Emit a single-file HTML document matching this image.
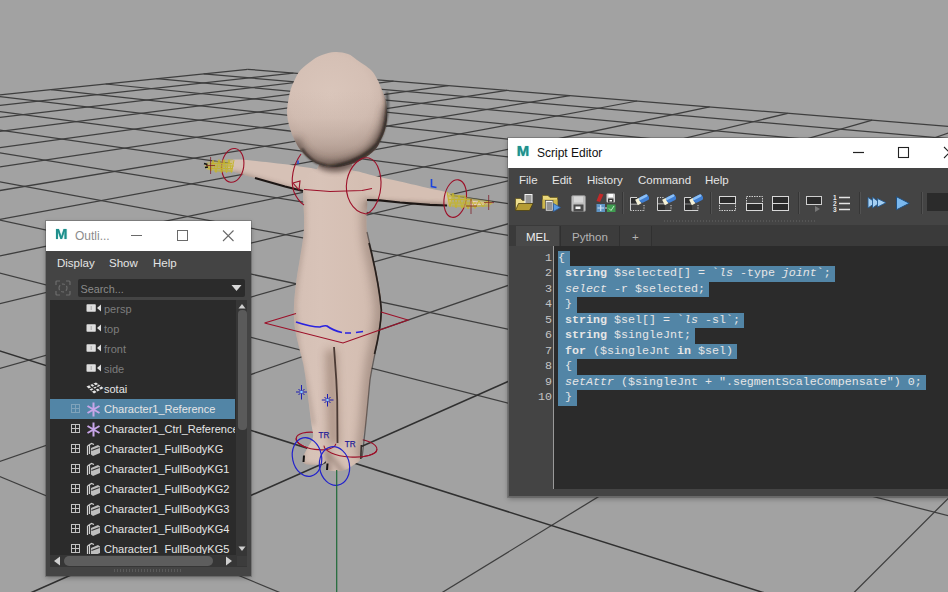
<!DOCTYPE html><html><head><meta charset="utf-8"><title>Maya</title><style>
html,body{margin:0;padding:0}
html{overflow:hidden;width:948px;height:592px}
body{width:948px;height:592px;overflow:hidden;background:#a2a2a2;position:relative;font-family:"Liberation Sans",sans-serif}
.win{position:absolute;background:#444;box-shadow:0 0 0 1px rgba(60,60,60,.3),0 2px 5px rgba(0,0,0,.3)}
.tb{position:absolute;left:0;top:0;right:0;background:#fff}
.mlogo{position:absolute;font-weight:bold;font-size:16px;line-height:16px;color:#1f8f8c;text-shadow:0 0 1px #3fb0ac}
.tt{position:absolute;font-size:12px;line-height:16px;white-space:nowrap}
.menu{position:absolute;left:0;right:0;color:#e4e4e4;font-size:11.500px}
.menu span{position:absolute;top:5px;white-space:nowrap}
.row{position:absolute;left:0;width:185px;height:20px;white-space:nowrap}
.row.sel{background:#5285a6}
.pm{position:absolute;left:21px;top:5px;width:7px;height:7px;border:1px solid #c2c2c2;background:linear-gradient(#c2c2c2,#c2c2c2) center/100% 1px no-repeat,linear-gradient(#c2c2c2,#c2c2c2) center/1px 100% no-repeat}
.pm.dim{border-color:#7fa3bb;background:linear-gradient(#7fa3bb,#7fa3bb) center/100% 1px no-repeat,linear-gradient(#7fa3bb,#7fa3bb) center/1px 100% no-repeat}
.ic{position:absolute;left:36px;top:3px;line-height:0}
.nm{position:absolute;left:54px;top:3px;font-size:11px;line-height:14px}
.tab{position:absolute;top:88px;height:20px;font-size:11.500px}
.tab span{position:absolute;top:4.500px}
.code{position:absolute;left:4px;top:4.500px;font-family:"Liberation Mono",monospace;font-size:11.670px;color:#e6e6e6;white-space:pre}
.cl{height:15.550px;line-height:15.550px}
.hl{background:#5285a6;display:inline-block;height:15.550px}
.nl{display:inline-block;width:4.500px}
.nums{position:absolute;left:0;top:112.500px;width:44px;font-family:"Liberation Mono",monospace;font-size:11.670px;color:#c4c4c4;text-align:right}
.ln{height:15.550px;line-height:15.550px}
</style></head><body><svg style="position:absolute;left:0;top:0" width="948" height="592" viewBox="0 0 948 592"><g stroke="#3e3e3e" stroke-width="1.25" fill="none"><line x1="1153.5" y1="900.0" x2="1200.0" y2="773.8"/><line x1="546.4" y1="900.0" x2="1200.0" y2="246.7"/><line x1="310.8" y1="900.0" x2="-200.0" y2="594.0"/><line x1="-59.3" y1="900.0" x2="1172.6" y2="144.6"/><line x1="1022.0" y1="900.0" x2="-200.0" y2="393.8"/><line x1="-200.0" y1="530.7" x2="963.8" y2="127.6"/><line x1="1200.0" y1="580.1" x2="-200.0" y2="222.0"/><line x1="-200.0" y1="425.3" x2="872.2" y2="120.2"/><line x1="1200.0" y1="477.8" x2="-200.0" y2="177.3"/><line x1="-200.0" y1="352.0" x2="787.7" y2="113.3"/><line x1="1200.0" y1="403.6" x2="-200.0" y2="144.9"/><line x1="-200.0" y1="298.0" x2="709.6" y2="106.9"/><line x1="1200.0" y1="347.4" x2="-200.0" y2="120.4"/><line x1="-200.0" y1="256.6" x2="637.2" y2="101.0"/><line x1="1200.0" y1="303.4" x2="-142.1" y2="109.6"/><line x1="-200.0" y1="223.8" x2="569.9" y2="95.6"/><line x1="1200.0" y1="267.9" x2="-72.3" y2="102.3"/><line x1="-200.0" y1="197.2" x2="507.1" y2="90.4"/><line x1="1200.0" y1="238.8" x2="-8.1" y2="95.7"/><line x1="-200.0" y1="175.2" x2="448.4" y2="85.7"/><line x1="1200.0" y1="214.4" x2="51.0" y2="89.6"/><line x1="-200.0" y1="156.8" x2="393.5" y2="81.2"/><line x1="1200.0" y1="193.7" x2="105.7" y2="84.0"/><line x1="-200.0" y1="141.0" x2="341.9" y2="77.0"/><line x1="1200.0" y1="175.9" x2="156.5" y2="78.7"/><line x1="-200.0" y1="127.4" x2="293.4" y2="73.1"/><line x1="1200.0" y1="160.4" x2="203.7" y2="73.9"/><line x1="-200.0" y1="115.5" x2="247.7" y2="69.3"/><line x1="1200.0" y1="146.9" x2="247.7" y2="69.3"/></g><g stroke="#303030" stroke-width="1.6" fill="none"><line x1="-200.0" y1="694.9" x2="1063.6" y2="135.8"/><line x1="1200.0" y1="730.7" x2="-200.0" y2="287.7"/></g>
<defs>
<radialGradient id="hg" gradientUnits="userSpaceOnUse" cx="330" cy="96" r="74">
<stop offset="0" stop-color="#dac6bb"/><stop offset="0.55" stop-color="#d5c0b5"/><stop offset="0.85" stop-color="#c8b2a7"/><stop offset="1" stop-color="#baa49a"/></radialGradient>
<linearGradient id="bg" gradientUnits="userSpaceOnUse" x1="294" y1="0" x2="383" y2="0">
<stop offset="0" stop-color="#d5c0b5"/><stop offset="0.3" stop-color="#d8c3b8"/><stop offset="0.7" stop-color="#d5bfb3"/><stop offset="1" stop-color="#cfb9ad"/></linearGradient>
<linearGradient id="hs" gradientUnits="userSpaceOnUse" x1="0" y1="90" x2="0" y2="168"><stop offset="0" stop-color="#5a463c" stop-opacity="0"/><stop offset="0.35" stop-color="#5a463c" stop-opacity="0.04"/><stop offset="0.7" stop-color="#5a463c" stop-opacity="0.18"/><stop offset="1" stop-color="#5a463c" stop-opacity="0.4"/></linearGradient>
<filter id="b1" filterUnits="userSpaceOnUse" x="150" y="0" width="400" height="592"><feGaussianBlur stdDeviation="1.2"/></filter>
<filter id="b2" filterUnits="userSpaceOnUse" x="150" y="0" width="400" height="592"><feGaussianBlur stdDeviation="2.5"/></filter>
<filter id="b4" filterUnits="userSpaceOnUse" x="150" y="0" width="400" height="592"><feGaussianBlur stdDeviation="4.5"/></filter>
<clipPath id="bodyclip"><path d="M324.0 172.0C322.0 168.9 309.0 168.1 300.0 166.5C291.0 164.9 280.0 163.7 270.0 162.5C260.0 161.3 246.5 159.8 240.0 159.5C233.5 159.2 233.0 159.6 231.0 160.5C229.0 161.4 227.8 163.2 228.0 165.0C228.2 166.8 226.3 168.5 232.0 171.0C237.7 173.5 253.2 177.4 262.0 180.0C270.8 182.6 278.2 184.7 285.0 186.5C291.8 188.3 298.5 191.2 303.0 191.0C307.5 190.8 308.5 188.2 312.0 185.0C315.5 181.8 326.0 175.1 324.0 172.0Z"/><path d="M350.0 171.0C352.5 169.0 366.7 174.2 375.0 176.0C383.3 177.8 390.8 179.4 400.0 181.5C409.2 183.6 422.2 186.7 430.0 188.5C437.8 190.3 443.3 190.9 447.0 192.5C450.7 194.1 451.8 195.9 452.0 198.0C452.2 200.1 451.7 203.9 448.0 205.0C444.3 206.1 438.0 204.8 430.0 204.3C422.0 203.8 408.3 202.8 400.0 202.0C391.7 201.2 385.5 200.2 380.0 199.8C374.5 199.4 370.3 201.5 367.0 199.5C363.7 197.5 362.8 192.8 360.0 188.0C357.2 183.2 347.5 173.0 350.0 171.0Z"/><path d="M323.0 163.0C328.7 161.8 345.2 161.8 350.0 163.0C354.8 164.2 350.0 167.5 352.0 170.0C354.0 172.5 359.5 173.0 362.0 178.0C364.5 183.0 366.2 193.8 367.0 200.0C367.8 206.2 366.5 209.7 366.5 215.0C366.5 220.3 366.2 226.2 367.0 232.0C367.8 237.8 369.5 243.7 371.0 250.0C372.5 256.3 374.5 263.3 376.0 270.0C377.5 276.7 379.1 283.3 380.0 290.0C380.9 296.7 381.3 304.2 381.5 310.0C381.7 315.8 381.8 319.2 381.0 325.0C380.2 330.8 378.3 339.2 377.0 345.0C375.7 350.8 374.2 354.2 373.0 360.0C371.8 365.8 370.8 373.3 370.0 380.0C369.2 386.7 368.6 393.3 368.0 400.0C367.4 406.7 367.2 414.7 366.5 420.0C365.8 425.3 364.8 427.8 364.0 432.0C363.2 436.2 362.4 440.7 362.0 445.0C361.6 449.3 362.7 454.8 361.5 458.0C360.3 461.2 357.8 462.0 355.0 464.0C352.2 466.0 348.8 468.8 345.0 470.0C341.2 471.2 335.2 471.3 332.0 471.0C328.8 470.7 327.0 469.8 326.0 468.0C325.0 466.2 326.7 460.7 326.0 460.0C325.3 459.3 325.0 463.2 322.0 464.0C319.0 464.8 311.2 464.8 308.0 464.5C304.8 464.2 303.8 463.2 303.0 462.0C302.2 460.8 302.2 459.5 303.0 457.0C303.8 454.5 306.3 450.3 308.0 447.0C309.7 443.7 312.4 440.7 313.0 437.0C313.6 433.3 312.2 430.3 311.5 425.0C310.8 419.7 309.8 411.7 309.0 405.0C308.2 398.3 307.4 391.7 306.5 385.0C305.6 378.3 304.8 371.7 303.5 365.0C302.2 358.3 300.0 351.7 298.5 345.0C297.0 338.3 295.2 331.7 294.5 325.0C293.8 318.3 293.7 312.5 294.0 305.0C294.3 297.5 295.5 287.8 296.5 280.0C297.5 272.2 298.8 265.5 300.0 258.0C301.2 250.5 302.8 242.2 303.5 235.0C304.2 227.8 304.1 222.2 304.0 215.0C303.9 207.8 302.7 198.5 303.0 192.0C303.3 185.5 303.8 179.7 306.0 176.0C308.2 172.3 313.2 172.2 316.0 170.0C318.8 167.8 317.3 164.2 323.0 163.0Z"/></clipPath>
<clipPath id="headclip"><path d="M335.0 52.0C339.3 51.8 344.3 52.7 348.0 54.0C351.7 55.3 353.2 57.3 357.0 60.0C360.8 62.7 367.6 66.7 371.0 70.0C374.4 73.3 375.8 76.7 377.6 80.0C379.4 83.3 380.6 86.7 382.0 90.0C383.4 93.3 384.9 96.7 385.7 100.0C386.5 103.3 386.8 106.7 387.0 110.0C387.2 113.3 387.3 116.7 387.0 120.0C386.7 123.3 386.0 126.7 385.0 130.0C384.0 133.3 382.5 136.7 380.8 140.0C379.1 143.3 378.1 146.7 374.9 150.0C371.7 153.3 366.1 157.4 361.4 160.0C356.7 162.6 351.1 164.3 346.5 165.5C341.9 166.7 338.1 167.0 334.0 167.0C329.9 167.0 325.9 166.7 322.0 165.5C318.1 164.3 314.4 162.6 310.8 160.0C307.2 157.4 303.2 153.3 300.5 150.0C297.8 146.7 296.3 143.3 294.6 140.0C292.9 136.7 291.6 133.3 290.5 130.0C289.4 126.7 288.4 123.3 287.8 120.0C287.2 116.7 286.9 113.3 287.0 110.0C287.1 106.7 287.8 103.3 288.4 100.0C289.0 96.7 289.5 93.3 290.5 90.0C291.5 86.7 292.9 83.3 294.6 80.0C296.3 76.7 297.5 73.3 300.5 70.0C303.5 66.7 309.1 62.5 312.7 60.0C316.3 57.5 318.3 56.3 322.0 55.0C325.7 53.7 330.7 52.2 335.0 52.0Z"/></clipPath>
</defs>
<g>
<g fill="none" stroke="#9c1029" stroke-width="1.100"><ellipse cx="316" cy="441" rx="20" ry="8.500" transform="rotate(8 316 441)"/><ellipse cx="350.500" cy="447.500" rx="26.500" ry="9.500" transform="rotate(4 350.500 447.500)"/></g>
<path d="M324.0 172.0C322.0 168.9 309.0 168.1 300.0 166.5C291.0 164.9 280.0 163.7 270.0 162.5C260.0 161.3 246.5 159.8 240.0 159.5C233.5 159.2 233.0 159.6 231.0 160.5C229.0 161.4 227.8 163.2 228.0 165.0C228.2 166.8 226.3 168.5 232.0 171.0C237.7 173.5 253.2 177.4 262.0 180.0C270.8 182.6 278.2 184.7 285.0 186.5C291.8 188.3 298.5 191.2 303.0 191.0C307.5 190.8 308.5 188.2 312.0 185.0C315.5 181.8 326.0 175.1 324.0 172.0Z" fill="#d6c1b6"/>
<path d="M350.0 171.0C352.5 169.0 366.7 174.2 375.0 176.0C383.3 177.8 390.8 179.4 400.0 181.5C409.2 183.6 422.2 186.7 430.0 188.5C437.8 190.3 443.3 190.9 447.0 192.5C450.7 194.1 451.8 195.9 452.0 198.0C452.2 200.1 451.7 203.9 448.0 205.0C444.3 206.1 438.0 204.8 430.0 204.3C422.0 203.8 408.3 202.8 400.0 202.0C391.7 201.2 385.5 200.2 380.0 199.8C374.5 199.4 370.3 201.5 367.0 199.5C363.7 197.5 362.8 192.8 360.0 188.0C357.2 183.2 347.5 173.0 350.0 171.0Z" fill="#d5bfb3"/>
<path d="M323.0 163.0C328.7 161.8 345.2 161.8 350.0 163.0C354.8 164.2 350.0 167.5 352.0 170.0C354.0 172.5 359.5 173.0 362.0 178.0C364.5 183.0 366.2 193.8 367.0 200.0C367.8 206.2 366.5 209.7 366.5 215.0C366.5 220.3 366.2 226.2 367.0 232.0C367.8 237.8 369.5 243.7 371.0 250.0C372.5 256.3 374.5 263.3 376.0 270.0C377.5 276.7 379.1 283.3 380.0 290.0C380.9 296.7 381.3 304.2 381.5 310.0C381.7 315.8 381.8 319.2 381.0 325.0C380.2 330.8 378.3 339.2 377.0 345.0C375.7 350.8 374.2 354.2 373.0 360.0C371.8 365.8 370.8 373.3 370.0 380.0C369.2 386.7 368.6 393.3 368.0 400.0C367.4 406.7 367.2 414.7 366.5 420.0C365.8 425.3 364.8 427.8 364.0 432.0C363.2 436.2 362.4 440.7 362.0 445.0C361.6 449.3 362.7 454.8 361.5 458.0C360.3 461.2 357.8 462.0 355.0 464.0C352.2 466.0 348.8 468.8 345.0 470.0C341.2 471.2 335.2 471.3 332.0 471.0C328.8 470.7 327.0 469.8 326.0 468.0C325.0 466.2 326.7 460.7 326.0 460.0C325.3 459.3 325.0 463.2 322.0 464.0C319.0 464.8 311.2 464.8 308.0 464.5C304.8 464.2 303.8 463.2 303.0 462.0C302.2 460.8 302.2 459.5 303.0 457.0C303.8 454.5 306.3 450.3 308.0 447.0C309.7 443.7 312.4 440.7 313.0 437.0C313.6 433.3 312.2 430.3 311.5 425.0C310.8 419.7 309.8 411.7 309.0 405.0C308.2 398.3 307.4 391.7 306.5 385.0C305.6 378.3 304.8 371.7 303.5 365.0C302.2 358.3 300.0 351.7 298.5 345.0C297.0 338.3 295.2 331.7 294.5 325.0C293.8 318.3 293.7 312.5 294.0 305.0C294.3 297.5 295.5 287.8 296.5 280.0C297.5 272.2 298.8 265.5 300.0 258.0C301.2 250.5 302.8 242.2 303.5 235.0C304.2 227.8 304.1 222.2 304.0 215.0C303.9 207.8 302.7 198.5 303.0 192.0C303.3 185.5 303.8 179.7 306.0 176.0C308.2 172.3 313.2 172.2 316.0 170.0C318.8 167.8 317.3 164.2 323.0 163.0Z" fill="url(#bg)"/>
<g clip-path="url(#bodyclip)">
 <path d="M232 173L262 182L285 188.5L303 193" stroke="#7a665e" stroke-width="5" fill="none" filter="url(#b2)" opacity="0.6"/>
 <path d="M367 203L400 205L447 207" stroke="#6a564e" stroke-width="6" fill="none" filter="url(#b2)" opacity="0.7"/>
 <path d="M368 200C368 215 367 232 371 250C376 270 380 290 381.500 310C381 325 377 345 373 360C370 380 368 400 366.500 420L362 458" stroke="#6a564e" stroke-width="14" fill="none" filter="url(#b4)" opacity="0.36"/>
 <path d="M316 166C326 174 345 174 356 165L356 160L316 160Z" fill="#5a4a44" filter="url(#b2)" opacity="0.8"/>
 <path d="M303 196L303.500 235L296.500 280L294 305L297 345L306 385L313 425" stroke="#8a7870" stroke-width="4" fill="none" filter="url(#b2)" opacity="0.45"/>
 <path d="M331 350L334 445" stroke="#7a5e50" stroke-width="11" fill="none" filter="url(#b4)" opacity="0.45"/>
 <path d="M303 440L300 465L330 470L326 450L345 475L365 465L362 452" stroke="#6a564e" stroke-width="4" fill="none" filter="url(#b2)" opacity="0.5"/>
</g>
<path d="M255 178L262 180L285 186.500L303 191" stroke="#1c1614" stroke-width="2.200" fill="none"/>
<path d="M367 200L380 200.300L400 202.500L430 204.800L447 205.500" stroke="#1c1614" stroke-width="2.200" fill="none"/>
<path d="M334 347L336.300 380L337.200 400L337.500 443" stroke="#4b3a34" stroke-width="1.800" fill="none"/>
<path d="M367 232C371 250 379 280 381.500 310C381 330 374 355 370 380C368 400 366 425 362 458" stroke="#2e2420" stroke-width="1.300" fill="none" opacity="0.55"/>
<path d="M369 243C372 255 379 282 381.300 310C381 325 378 340 374.500 354" stroke="#1a1412" stroke-width="1.700" fill="none" opacity="0.85"/>
<path d="M303.500 462L304 455.500M327 470L327.500 463.500" stroke="#111" stroke-width="2" fill="none"/><path d="M361.300 445L360.800 459" stroke="#111" stroke-width="1.400" fill="none" opacity="0.85"/>
<path d="M335.0 52.0C339.3 51.8 344.3 52.7 348.0 54.0C351.7 55.3 353.2 57.3 357.0 60.0C360.8 62.7 367.6 66.7 371.0 70.0C374.4 73.3 375.8 76.7 377.6 80.0C379.4 83.3 380.6 86.7 382.0 90.0C383.4 93.3 384.9 96.7 385.7 100.0C386.5 103.3 386.8 106.7 387.0 110.0C387.2 113.3 387.3 116.7 387.0 120.0C386.7 123.3 386.0 126.7 385.0 130.0C384.0 133.3 382.5 136.7 380.8 140.0C379.1 143.3 378.1 146.7 374.9 150.0C371.7 153.3 366.1 157.4 361.4 160.0C356.7 162.6 351.1 164.3 346.5 165.5C341.9 166.7 338.1 167.0 334.0 167.0C329.9 167.0 325.9 166.7 322.0 165.5C318.1 164.3 314.4 162.6 310.8 160.0C307.2 157.4 303.2 153.3 300.5 150.0C297.8 146.7 296.3 143.3 294.6 140.0C292.9 136.7 291.6 133.3 290.5 130.0C289.4 126.7 288.4 123.3 287.8 120.0C287.2 116.7 286.9 113.3 287.0 110.0C287.1 106.7 287.8 103.3 288.4 100.0C289.0 96.7 289.5 93.3 290.5 90.0C291.5 86.7 292.9 83.3 294.6 80.0C296.3 76.7 297.5 73.3 300.5 70.0C303.5 66.7 309.1 62.5 312.7 60.0C316.3 57.5 318.3 56.3 322.0 55.0C325.7 53.7 330.7 52.2 335.0 52.0Z" fill="url(#hg)"/>
<path d="M335.0 52.0C339.3 51.8 344.3 52.7 348.0 54.0C351.7 55.3 353.2 57.3 357.0 60.0C360.8 62.7 367.6 66.7 371.0 70.0C374.4 73.3 375.8 76.7 377.6 80.0C379.4 83.3 380.6 86.7 382.0 90.0C383.4 93.3 384.9 96.7 385.7 100.0C386.5 103.3 386.8 106.7 387.0 110.0C387.2 113.3 387.3 116.7 387.0 120.0C386.7 123.3 386.0 126.7 385.0 130.0C384.0 133.3 382.5 136.7 380.8 140.0C379.1 143.3 378.1 146.7 374.9 150.0C371.7 153.3 366.1 157.4 361.4 160.0C356.7 162.6 351.1 164.3 346.5 165.5C341.9 166.7 338.1 167.0 334.0 167.0C329.9 167.0 325.9 166.7 322.0 165.5C318.1 164.3 314.4 162.6 310.8 160.0C307.2 157.4 303.2 153.3 300.5 150.0C297.8 146.7 296.3 143.3 294.6 140.0C292.9 136.7 291.6 133.3 290.5 130.0C289.4 126.7 288.4 123.3 287.8 120.0C287.2 116.7 286.9 113.3 287.0 110.0C287.1 106.7 287.8 103.3 288.4 100.0C289.0 96.7 289.5 93.3 290.5 90.0C291.5 86.7 292.9 83.3 294.6 80.0C296.3 76.7 297.5 73.3 300.5 70.0C303.5 66.7 309.1 62.5 312.7 60.0C316.3 57.5 318.3 56.3 322.0 55.0C325.7 53.7 330.7 52.2 335.0 52.0Z" fill="url(#hs)"/>
<g clip-path="url(#headclip)">
 <path d="M294 140C299 152 307 160 317 164.500C328 169 345 166 362 158C376 150 386 132 389 108" stroke="#4a3a34" stroke-width="9" fill="none" filter="url(#b4)" opacity="0.75"/>
 <path d="M384 70C390 100 390 130 378 146C368 157 352 164 334 168" stroke="#2a201c" stroke-width="4" fill="none" filter="url(#b2)" opacity="0.8"/>
</g>
<path d="M387 92C389 110 386 130 377 144C368 154 355 161 340 165C333 167 325 166 317 163C311 160 306 155 302 149" stroke="#1e1613" stroke-width="1.600" fill="none" filter="url(#b1)" opacity="0.9"/>
</g>

<g fill="none" stroke-width="1.1">
<g stroke="#9c1029">
<ellipse cx="232.8" cy="165.4" rx="11" ry="17" transform="rotate(8 232.8 165.4)"/>
<ellipse cx="455.2" cy="198.6" rx="11" ry="19" transform="rotate(10 455.2 198.6)"/>
<path d="M301 154C293 165 290 180 294 192C297 199 301 203 304 205"/>
<path d="M293 183L300 181L299 190Z"/>
<path d="M366 214C352 212 344 196 347 180C350 166 360 156 369 158C379 161 383 178 380 193C378 204 372 212 366 214Z"/>
<path d="M304 189.500L330 191.500L362 190.500L372 188.500"/>
<path d="M264.5 323L296 313.5M381 312L408 320L343 343L264.5 323"/>
<path d="M-20 0A20 8.500 0 0 0 20 0" transform="translate(316 441) rotate(8)"/>
<path d="M-26.500 0A26.500 9.500 0 0 0 26.500 0" transform="translate(350.500 447.500) rotate(4)"/>
</g>
<g stroke="#2222cc" stroke-width="1.2">
<ellipse cx="307" cy="457" rx="14.5" ry="19.5" transform="rotate(-12 307 457)"/>
<ellipse cx="334.5" cy="466" rx="15" ry="19.5" transform="rotate(-10 334.5 466)"/>
</g>
<path d="M296 322C305 325 313 327 320 327C323 326 325 325 327 326C331 329 335 331 342 332.5" stroke="#2a22e0" stroke-width="1.6"/>
<path d="M345 333L351 333M356 332.5L363 331.5" stroke="#2a22e0" stroke-width="1.6"/>
<g stroke="#1a44dd" stroke-width="1.2">
<g stroke="#1c1cb4" stroke-width="1"><path d="M301.500 385V399.500M296 392H307M298.500 389L304.500 395M298.500 395L304.500 389"/>
<path d="M327.500 394V406.500M321.800 400H333.500M324.500 397L330.500 403M324.500 403L330.500 397"/></g>
<circle cx="301.500" cy="392" r="1.300" fill="#8fd4ff" stroke="none"/><circle cx="327.500" cy="400" r="1.300" fill="#8fd4ff" stroke="none"/>
<path d="M431.5 179V186.5L436.5 187.5" stroke-width="1.6"/>
<path d="M298 160.5V164" stroke-width="1.4"/>
</g>
<!-- hands -->
<path d="M233 159L207 162L204 166L207 170L233 172Z" fill="#c9bb4e" stroke="none" opacity="0.5"/>
<path d="M447 192L470 198L492 201.500L493 204L470 208.500L448 206Z" fill="#c9bb4e" stroke="none" opacity="0.5"/>
<path d="M470 200.500L493 203L470 206.500Z" fill="#e6cdbf" stroke="none"/>
<g stroke="#c4b42c" stroke-width="1" opacity="0.9">
<path d="M207 164L211 171L213 160L216 172.500L219 159.500L221.500 173L224 159.500L226.500 173L229 159.500L231.500 172.500L234 160"/>
<path d="M206 166H234M208 168.500H233M210 163.500H232M214 171H232"/>
<path d="M447 192L450 207L453 193L456 208L459 195L462 208.500L465 197L468 209L471 199L475 208.500L479 200.500L483 207L487 201L491 204.500"/>
<path d="M448 196H466M449 199.500H472M450 203H476M452 206H490M474 203H492"/>
</g>
<g stroke="#7a1420" stroke-width="0.900" opacity="0.8">
<path d="M210.600 157V174M206 165.500H215"/>
<path d="M471 199V214M466 206H477"/>
<path d="M488.700 195V210M484 202.600H494"/>
</g>
<path d="M204 163.500L207.500 164.500M205 167.500L208 167" stroke="#111" stroke-width="1.600"/>
<path d="M336.700 470V592" stroke="#1f6a38" stroke-width="1.2"/>
</g>
<g font-family="'Liberation Sans',sans-serif" font-size="9.500" fill="#241c98" stroke="#241c98" stroke-width="0.250">
<text x="318.500" y="438" textLength="10.800" lengthAdjust="spacingAndGlyphs">TR</text><text x="344.800" y="446.500" textLength="10.800" lengthAdjust="spacingAndGlyphs">TR</text>
</g>
</svg>
<div class="win" id="ol" style="left:46px;top:221px;width:205px;height:355px">
 <div class="tb" style="height:30px"><span class="mlogo" style="left:8.700px;top:5px;font-size:14px;transform:scaleX(1.07);transform-origin:0 0">M</span><span class="tt" style="left:29px;top:7px;color:#8c8c8c">Outli...</span>
  <svg style="position:absolute;left:84px;top:0" width="121" height="30"><path d="M1 14.500H12" stroke="#6a6a6a" stroke-width="1"/><rect x="47.500" y="9.500" width="10" height="10" fill="none" stroke="#6a6a6a"/><path d="M93 9.500L103.500 20M103.500 9.500L93 20" stroke="#6a6a6a" stroke-width="1.100"/></svg>
 </div>
 <div class="menu" style="top:30.600px;height:26px"><span style="left:11px">Display</span><span style="left:63px">Show</span><span style="left:107px">Help</span></div>
 <svg style="position:absolute;left:8px;top:58px" width="18" height="18" viewBox="0 0 18 18"><g fill="none" stroke="#6c6c6c" stroke-width="1.200"><path d="M2 6V3Q2 2 3 2H6M12 2H15Q16 2 16 3V6M16 12V15Q16 16 15 16H12M6 16H3Q2 16 2 15V12"/><path d="M5 9A4 4 0 0 1 13 9M13 9A4 4 0 0 1 5 9" stroke-dasharray="3 2"/></g></svg>
 <div style="position:absolute;left:32px;top:58px;width:167px;height:18px;background:#2b2b2b;border-radius:2px"><span style="position:absolute;left:2.500px;top:3.500px;color:#8a8a8a;font-size:10.800px;line-height:13px">Search...</span>
  <svg style="position:absolute;right:3px;top:5px" width="11" height="8"><path d="M0.500 1H10.500L5.500 7Z" fill="#d8d8d8"/></svg></div>
 <div style="position:absolute;left:4px;top:79px;width:197px;height:255px;background:#2b2b2b;overflow:hidden">
  <div style="position:absolute;left:0;top:-1px;width:185px;height:254.500px;overflow:hidden"><div class="row" style="top:0px"><span class="ic"><svg width="16" height="12" viewBox="0 0 16 12"><rect x="0.500" y="2.200" width="9.300" height="7.600" rx="0.800" fill="#dedede"/><path d="M5.200 4V8" stroke="#9a9a9a" stroke-width="0.800"/><path d="M11 6L15 2.400V9.600Z" fill="#dedede"/></svg></span><span class="nm" style="color:#7d7d7d">persp</span></div><div class="row" style="top:20px"><span class="ic"><svg width="16" height="12" viewBox="0 0 16 12"><rect x="0.500" y="2.200" width="9.300" height="7.600" rx="0.800" fill="#dedede"/><path d="M5.200 4V8" stroke="#9a9a9a" stroke-width="0.800"/><path d="M11 6L15 2.400V9.600Z" fill="#dedede"/></svg></span><span class="nm" style="color:#7d7d7d">top</span></div><div class="row" style="top:40px"><span class="ic"><svg width="16" height="12" viewBox="0 0 16 12"><rect x="0.500" y="2.200" width="9.300" height="7.600" rx="0.800" fill="#dedede"/><path d="M5.200 4V8" stroke="#9a9a9a" stroke-width="0.800"/><path d="M11 6L15 2.400V9.600Z" fill="#dedede"/></svg></span><span class="nm" style="color:#7d7d7d">front</span></div><div class="row" style="top:60px"><span class="ic"><svg width="16" height="12" viewBox="0 0 16 12"><rect x="0.500" y="2.200" width="9.300" height="7.600" rx="0.800" fill="#dedede"/><path d="M5.200 4V8" stroke="#9a9a9a" stroke-width="0.800"/><path d="M11 6L15 2.400V9.600Z" fill="#dedede"/></svg></span><span class="nm" style="color:#7d7d7d">side</span></div><div class="row" style="top:80px"><span class="ic"><svg width="18" height="12" viewBox="0 0 18 12"><path d="M0.500 4.500L10 0.500L17.500 6L8 11.500Z" fill="#e6e6e6"/><path d="M3.700 3.200L11.200 9.700M6.800 1.800L14.300 7.800M3 7L12.500 2.500M5.500 9.200L15 4.200" stroke="#2b2b2b" stroke-width="1.300"/></svg></span><span class="nm" style="color:#e6e6e6">sotai</span></div><div class="row sel" style="top:100px"><span class="pm dim"></span><span class="ic"><svg width="15" height="15" viewBox="0 0 15 15"><path d="M7.500 0.500V14.500M1.500 4L13.500 11M1.500 11L13.500 4" stroke="#c7a5e8" stroke-width="2"/></svg></span><span class="nm" style="color:#e6e6e6">Character1_Reference</span></div><div class="row" style="top:120px"><span class="pm"></span><span class="ic"><svg width="15" height="15" viewBox="0 0 15 15"><path d="M7.500 0.500V14.500M1.500 4L13.500 11M1.500 11L13.500 4" stroke="#c7a5e8" stroke-width="2"/></svg></span><span class="nm" style="color:#e6e6e6">Character1_Ctrl_Reference</span></div><div class="row" style="top:140px"><span class="pm"></span><span class="ic"><svg width="15" height="15" viewBox="0 0 15 15"><path d="M1.500 4V13M3.500 2.500V12M1.500 4L5.500 1.500L8 2.500" stroke="#d0d0d0" stroke-width="1.200" fill="none"/><path d="M5 6L12 3L14 4.500V11L7 14L5 12.500Z" fill="#bdbdbd"/><path d="M5.500 8.500L13.500 5.500" stroke="#333" stroke-width="1.200"/></svg></span><span class="nm" style="color:#e6e6e6">Character1_FullBodyKG</span></div><div class="row" style="top:160px"><span class="pm"></span><span class="ic"><svg width="15" height="15" viewBox="0 0 15 15"><path d="M1.500 4V13M3.500 2.500V12M1.500 4L5.500 1.500L8 2.500" stroke="#d0d0d0" stroke-width="1.200" fill="none"/><path d="M5 6L12 3L14 4.500V11L7 14L5 12.500Z" fill="#bdbdbd"/><path d="M5.500 8.500L13.500 5.500" stroke="#333" stroke-width="1.200"/></svg></span><span class="nm" style="color:#e6e6e6">Character1_FullBodyKG1</span></div><div class="row" style="top:180px"><span class="pm"></span><span class="ic"><svg width="15" height="15" viewBox="0 0 15 15"><path d="M1.500 4V13M3.500 2.500V12M1.500 4L5.500 1.500L8 2.500" stroke="#d0d0d0" stroke-width="1.200" fill="none"/><path d="M5 6L12 3L14 4.500V11L7 14L5 12.500Z" fill="#bdbdbd"/><path d="M5.500 8.500L13.500 5.500" stroke="#333" stroke-width="1.200"/></svg></span><span class="nm" style="color:#e6e6e6">Character1_FullBodyKG2</span></div><div class="row" style="top:200px"><span class="pm"></span><span class="ic"><svg width="15" height="15" viewBox="0 0 15 15"><path d="M1.500 4V13M3.500 2.500V12M1.500 4L5.500 1.500L8 2.500" stroke="#d0d0d0" stroke-width="1.200" fill="none"/><path d="M5 6L12 3L14 4.500V11L7 14L5 12.500Z" fill="#bdbdbd"/><path d="M5.500 8.500L13.500 5.500" stroke="#333" stroke-width="1.200"/></svg></span><span class="nm" style="color:#e6e6e6">Character1_FullBodyKG3</span></div><div class="row" style="top:220px"><span class="pm"></span><span class="ic"><svg width="15" height="15" viewBox="0 0 15 15"><path d="M1.500 4V13M3.500 2.500V12M1.500 4L5.500 1.500L8 2.500" stroke="#d0d0d0" stroke-width="1.200" fill="none"/><path d="M5 6L12 3L14 4.500V11L7 14L5 12.500Z" fill="#bdbdbd"/><path d="M5.500 8.500L13.500 5.500" stroke="#333" stroke-width="1.200"/></svg></span><span class="nm" style="color:#e6e6e6">Character1_FullBodyKG4</span></div><div class="row" style="top:240px"><span class="pm"></span><span class="ic"><svg width="15" height="15" viewBox="0 0 15 15"><path d="M1.500 4V13M3.500 2.500V12M1.500 4L5.500 1.500L8 2.500" stroke="#d0d0d0" stroke-width="1.200" fill="none"/><path d="M5 6L12 3L14 4.500V11L7 14L5 12.500Z" fill="#bdbdbd"/><path d="M5.500 8.500L13.500 5.500" stroke="#333" stroke-width="1.200"/></svg></span><span class="nm" style="color:#e6e6e6">Character1_FullBodyKG5</span></div></div>
  <div style="position:absolute;left:186px;top:0;width:11px;height:255px;background:#363636">
   <svg style="position:absolute;left:1px;top:2px" width="10" height="8"><path d="M1.500 6.500L5 2L8.500 6.500Z" fill="#cfcfcf"/></svg>
   <div style="position:absolute;left:1.500px;top:10px;width:9px;height:120px;background:#5a5a5a;border-radius:4px"></div>
   <svg style="position:absolute;left:1px;top:245px" width="10" height="8"><path d="M1.500 1.500L5 6L8.500 1.500Z" fill="#cfcfcf"/></svg>
  </div>
 </div>
 <div style="position:absolute;left:4px;top:334px;width:197px;height:12px;background:#363636">
  <svg style="position:absolute;left:3px;top:1px" width="8" height="10"><path d="M7 0.500L1 5L7 9.500Z" fill="#cfcfcf"/></svg>
  <div style="position:absolute;left:14px;top:1px;width:149px;height:10px;background:#5d5d5d;border-radius:5px"></div>
  <svg style="position:absolute;left:175px;top:1px" width="8" height="10"><path d="M1 0.500L7 5L1 9.500Z" fill="#cfcfcf"/></svg>
  <div style="position:absolute;left:187px;top:1px;width:10px;height:10px;background:#3c3c3c"></div>
 </div>
 <div style="position:absolute;left:68px;top:348px;width:68px;height:3px;background:repeating-linear-gradient(90deg,#5a5a5a 0 1px,transparent 1px 3px)"></div>
</div>

<div style="position:absolute;left:508px;top:138px;width:440px;height:359px;box-shadow:0 0 0 1px rgba(60,60,60,.3),0 2px 5px rgba(0,0,0,.3);clip-path:inset(-10px 0 -10px -10px)"></div>
<div class="win" id="se" style="left:508px;top:138px;width:440px;height:359px;overflow:hidden;box-shadow:none">
 <div class="tb" style="height:30px"><span class="mlogo" style="left:8.700px;top:4.500px;font-size:15px">M</span><span class="tt" style="left:29px;top:7px;color:#111">Script Editor</span>
  <svg style="position:absolute;left:340px;top:0" width="108" height="30"><path d="M5 14.500H16" stroke="#222" stroke-width="1.200"/><rect x="50.500" y="9.500" width="10" height="10" fill="none" stroke="#222" stroke-width="1.100"/><path d="M96 9L107 20M107 9L96 20" stroke="#222" stroke-width="1.100"/></svg>
 </div>
 <div class="menu" style="top:31.200px;height:24px"><span style="left:11px">File</span><span style="left:44px">Edit</span><span style="left:79px">History</span><span style="left:130px">Command</span><span style="left:197px">Help</span></div>
 <svg style="position:absolute;left:6px;top:55px" width="20" height="20" viewBox="0 0 20 20"><path d="M1.500 5.500H6.500L8.500 7.500H13.500V16.500H1.500Z" fill="#efe08f" stroke="#5a4c14" stroke-width="0.700"/><rect x="10.500" y="1" width="8" height="9.500" fill="#f6f6f6"/><path d="M11.500 3H17.500M11.500 5H17.500M11.500 7H17.500M11.500 9H17.500" stroke="#3a3a3a" stroke-width="1"/><path d="M1.500 17.500L4.500 10.500H19L15.500 17.500Z" fill="#b59c34" stroke="#4d4010" stroke-width="0.800"/></svg><svg style="position:absolute;left:33px;top:55px" width="20" height="20" viewBox="0 0 20 20"><path d="M1.500 2.500H7L9 4.500H16.500V15.500H1.500Z" fill="#e9d77c" stroke="#6a5a18" stroke-width="0.700"/><path d="M1.500 6.500H16.500V15.500H1.500Z" fill="#cdb64c"/><rect x="4.500" y="7.500" width="7.500" height="10.500" fill="#f2f2f2" stroke="#4a4a4a" stroke-width="0.700"/><path d="M5.500 10H11M5.500 12H11M5.500 14H11M5.500 16H11" stroke="#333" stroke-width="1"/><path d="M12.500 10.500L19.500 14.500L12.500 18.500Z" fill="#5a9ae0" stroke="#2a5a9a" stroke-width="0.800"/></svg><svg style="position:absolute;left:61px;top:55px" width="20" height="20" viewBox="0 0 20 20"><rect x="2.500" y="2.500" width="14" height="16" rx="1.500" fill="#bdbdbd" stroke="#8a8a8a" stroke-width="0.700"/><rect x="5" y="3.500" width="9" height="6" fill="#d6d6d6"/><rect x="4.500" y="11.500" width="10" height="7" fill="#4a4a4a"/><rect x="6.500" y="13.500" width="5" height="2.500" fill="#f4f4f4"/></svg><svg style="position:absolute;left:88px;top:55px" width="20" height="20" viewBox="0 0 20 20"><path d="M3.500 0.500L7.500 1.500L4 9L0.500 8Z" fill="#c42828"/><rect x="10.500" y="0.500" width="8.500" height="9" rx="1" fill="#cfcfcf"/><rect x="12.500" y="1" width="4.500" height="3" fill="#fff"/><rect x="12" y="5.500" width="5.500" height="4" fill="#3a3a3a"/><rect x="13.500" y="7" width="2.500" height="1.500" fill="#eee"/><rect x="0.500" y="11" width="8.500" height="8" fill="#5f94c4"/><path d="M1.500 15H8M4.700 12V18" stroke="#cfe2f4" stroke-width="1.200"/><rect x="11" y="11.500" width="8.500" height="7.500" fill="#3f9c50"/><path d="M13 15.500L15 17.500L18 13" stroke="#bfe8c6" stroke-width="1" fill="none"/><path d="M9 15H11" stroke="#ddd" stroke-width="1"/></svg><svg style="position:absolute;left:121px;top:55px" width="20" height="20" viewBox="0 0 20 20"><g fill="none" stroke="#d2d2d2" stroke-width="1"><path d="M1.500 4.500V17.500"/><path d="M1.500 11H9"/><path d="M1.500 4.500H8"/><path d="M1.500 17.500H15" stroke-dasharray="1.200 1.200"/><path d="M15 12V17.500" stroke-dasharray="1.200 1.200"/></g><rect x="2" y="5" width="6" height="5.500" fill="#2d2d2d"/><g transform="translate(7.500 9.500) rotate(-27)"><rect x="0" y="-3" width="4" height="6" fill="#f5f1d6"/><rect x="3.500" y="-3" width="10" height="6" rx="2.500" fill="#3f7fd4"/><rect x="3.500" y="-3" width="9.500" height="2.500" rx="1.200" fill="#8cc0f6"/></g></svg><svg style="position:absolute;left:148px;top:55px" width="20" height="20" viewBox="0 0 20 20"><g fill="none" stroke="#d2d2d2" stroke-width="1"><path d="M1.500 4.500V17.500"/><path d="M1.500 11H9"/><path d="M1.500 4.500H8" stroke-dasharray="1.200 1.200"/><path d="M1.500 17.500H15"/><path d="M15 12V17.500" stroke-dasharray="1.200 1.200"/></g><rect x="2" y="11.500" width="7" height="5.500" fill="#2d2d2d"/><g transform="translate(7.500 9.500) rotate(-27)"><rect x="0" y="-3" width="4" height="6" fill="#f5f1d6"/><rect x="3.500" y="-3" width="10" height="6" rx="2.500" fill="#3f7fd4"/><rect x="3.500" y="-3" width="9.500" height="2.500" rx="1.200" fill="#8cc0f6"/></g></svg><svg style="position:absolute;left:175px;top:55px" width="20" height="20" viewBox="0 0 20 20"><g fill="none" stroke="#d2d2d2" stroke-width="1"><path d="M1.500 4.500V17.500"/><path d="M1.500 11H9"/><path d="M1.500 4.500H8"/><path d="M1.500 17.500H15"/><path d="M15 12V17.500" stroke-dasharray="1.200 1.200"/></g><rect x="2" y="5" width="6" height="5.500" fill="#2d2d2d"/><rect x="2" y="11.500" width="7" height="5.500" fill="#2d2d2d"/><g transform="translate(7.500 9.500) rotate(-27)"><rect x="0" y="-3" width="4" height="6" fill="#f5f1d6"/><rect x="3.500" y="-3" width="10" height="6" rx="2.500" fill="#3f7fd4"/><rect x="3.500" y="-3" width="9.500" height="2.500" rx="1.200" fill="#8cc0f6"/></g></svg><svg style="position:absolute;left:210px;top:55px" width="20" height="20" viewBox="0 0 20 20"><rect x="1.500" y="3.500" width="16" height="14" fill="none" stroke="#d0d0d0" stroke-dasharray="1.500 1"/><rect x="1.500" y="3.500" width="16" height="7" fill="#2b2b2b" stroke="#d8d8d8"/></svg><svg style="position:absolute;left:237px;top:55px" width="20" height="20" viewBox="0 0 20 20"><rect x="1.500" y="3.500" width="16" height="14" fill="none" stroke="#d0d0d0" stroke-dasharray="1.500 1"/><rect x="1.500" y="10.500" width="16" height="7" fill="#2b2b2b" stroke="#d8d8d8"/></svg><svg style="position:absolute;left:263px;top:55px" width="20" height="20" viewBox="0 0 20 20"><rect x="1.500" y="3.500" width="16" height="14" fill="#2b2b2b" stroke="#d8d8d8"/><path d="M1.500 10.500H17.500" stroke="#d8d8d8"/></svg><svg style="position:absolute;left:296px;top:55px" width="20" height="20" viewBox="0 0 20 20"><rect x="2.500" y="3.500" width="15" height="8" fill="#2b2b2b" stroke="#cfcfcf"/><path d="M11 13L16 16L11 19Z" fill="#777"/></svg><svg style="position:absolute;left:324px;top:55px" width="20" height="20" viewBox="0 0 20 20"><path d="M7 4.500H18M7 10.500H18M7 16.500H18" stroke="#e4e4e4" stroke-width="1.300"/><g font-family="'Liberation Sans',sans-serif" font-size="6.500" font-weight="bold" fill="#e8e8e8"><text x="1" y="6.500">1</text><text x="1" y="12.500">2</text><text x="1" y="18.500">3</text></g></svg><svg style="position:absolute;left:358px;top:55px" width="20" height="20" viewBox="0 0 20 20"><g fill="#a5cff2" stroke="#255a90" stroke-width="0.900"><path d="M2 4.300L9.500 9.700L2 15Z"/><path d="M6.500 4.300L14 9.700L6.500 15Z"/><path d="M11.500 5.500L20 9.700L11.500 14Z"/></g></svg><svg style="position:absolute;left:386px;top:55px" width="20" height="20" viewBox="0 0 20 20"><path d="M2.500 3.700L15.300 10.300L2.500 16.800Z" fill="#7ab8ee" stroke="#1f4f80" stroke-width="1"/></svg><div style="position:absolute;left:114px;top:54px;width:1px;height:22px;background:#363636;border-right:1px solid #525252"></div><div style="position:absolute;left:202px;top:54px;width:1px;height:22px;background:#363636;border-right:1px solid #525252"></div><div style="position:absolute;left:290px;top:54px;width:1px;height:22px;background:#363636;border-right:1px solid #525252"></div><div style="position:absolute;left:351px;top:54px;width:1px;height:22px;background:#363636;border-right:1px solid #525252"></div><div style="position:absolute;left:413px;top:54px;width:1px;height:22px;background:#363636;border-right:1px solid #525252"></div>
 <div style="position:absolute;left:419px;top:55px;width:30px;height:18px;background:#2b2b2b"></div>
 <div style="position:absolute;left:156px;top:82px;width:152px;height:2px;background:repeating-linear-gradient(90deg,#555 0 1px,transparent 1px 3px)"></div>
 <div style="position:absolute;left:1px;top:87px;width:447px;height:21px;background:#3a3a3a"></div>
 <div class="tab" style="left:8px;width:43px;background:#494949;color:#eee"><span style="left:10px">MEL</span></div>
 <div class="tab" style="left:52px;width:58px;background:#3c3c3c;color:#b4b4b4;border-left:1px solid #303030"><span style="left:11px">Python</span></div>
 <div class="tab" style="left:111px;width:31px;background:#3c3c3c;color:#b4b4b4;border-left:1px solid #303030;border-right:1px solid #303030"><span style="left:12px">+</span></div>
 <div style="position:absolute;left:45px;top:108px;width:1px;height:243px;background:#9a9a9a"></div>
 <div style="position:absolute;left:46px;top:108px;width:402px;height:243px;background:#2b2b2b;overflow:hidden">
  <div class="code"><div class="cl"><span class="hl">{<span class="nl"></span></span></div><div class="cl"><span class="hl"> <b>string</b> $selected[] = `<i>ls</i> -type <i>joint</i>`;<span class="nl"></span></span></div><div class="cl"><span class="hl"> <i>select</i> -r $selected;<span class="nl"></span></span></div><div class="cl"><span class="hl"> }<span class="nl"></span></span></div><div class="cl"><span class="hl"> <b>string</b> $sel[] = `<i>ls</i> -sl`;<span class="nl"></span></span></div><div class="cl"><span class="hl"> <b>string</b> $singleJnt;<span class="nl"></span></span></div><div class="cl"><span class="hl"> <b>for</b> ($singleJnt <b>in</b> $sel)<span class="nl"></span></span></div><div class="cl"><span class="hl"> {<span class="nl"></span></span></div><div class="cl"><span class="hl"> <i>setAttr</i> ($singleJnt + ".segmentScaleCompensate") 0;<span class="nl"></span></span></div><div class="cl"><span class="hl"> }<span class="nl"></span></span></div></div>
 </div>
 <div class="nums"><div class="ln">1</div><div class="ln">2</div><div class="ln">3</div><div class="ln">4</div><div class="ln">5</div><div class="ln">6</div><div class="ln">7</div><div class="ln">8</div><div class="ln">9</div><div class="ln">10</div></div>
 <div style="position:absolute;left:0;top:30px;width:447px;height:328px;border:1px solid #686868;border-top:none;pointer-events:none"></div>
</div>
</body></html>
